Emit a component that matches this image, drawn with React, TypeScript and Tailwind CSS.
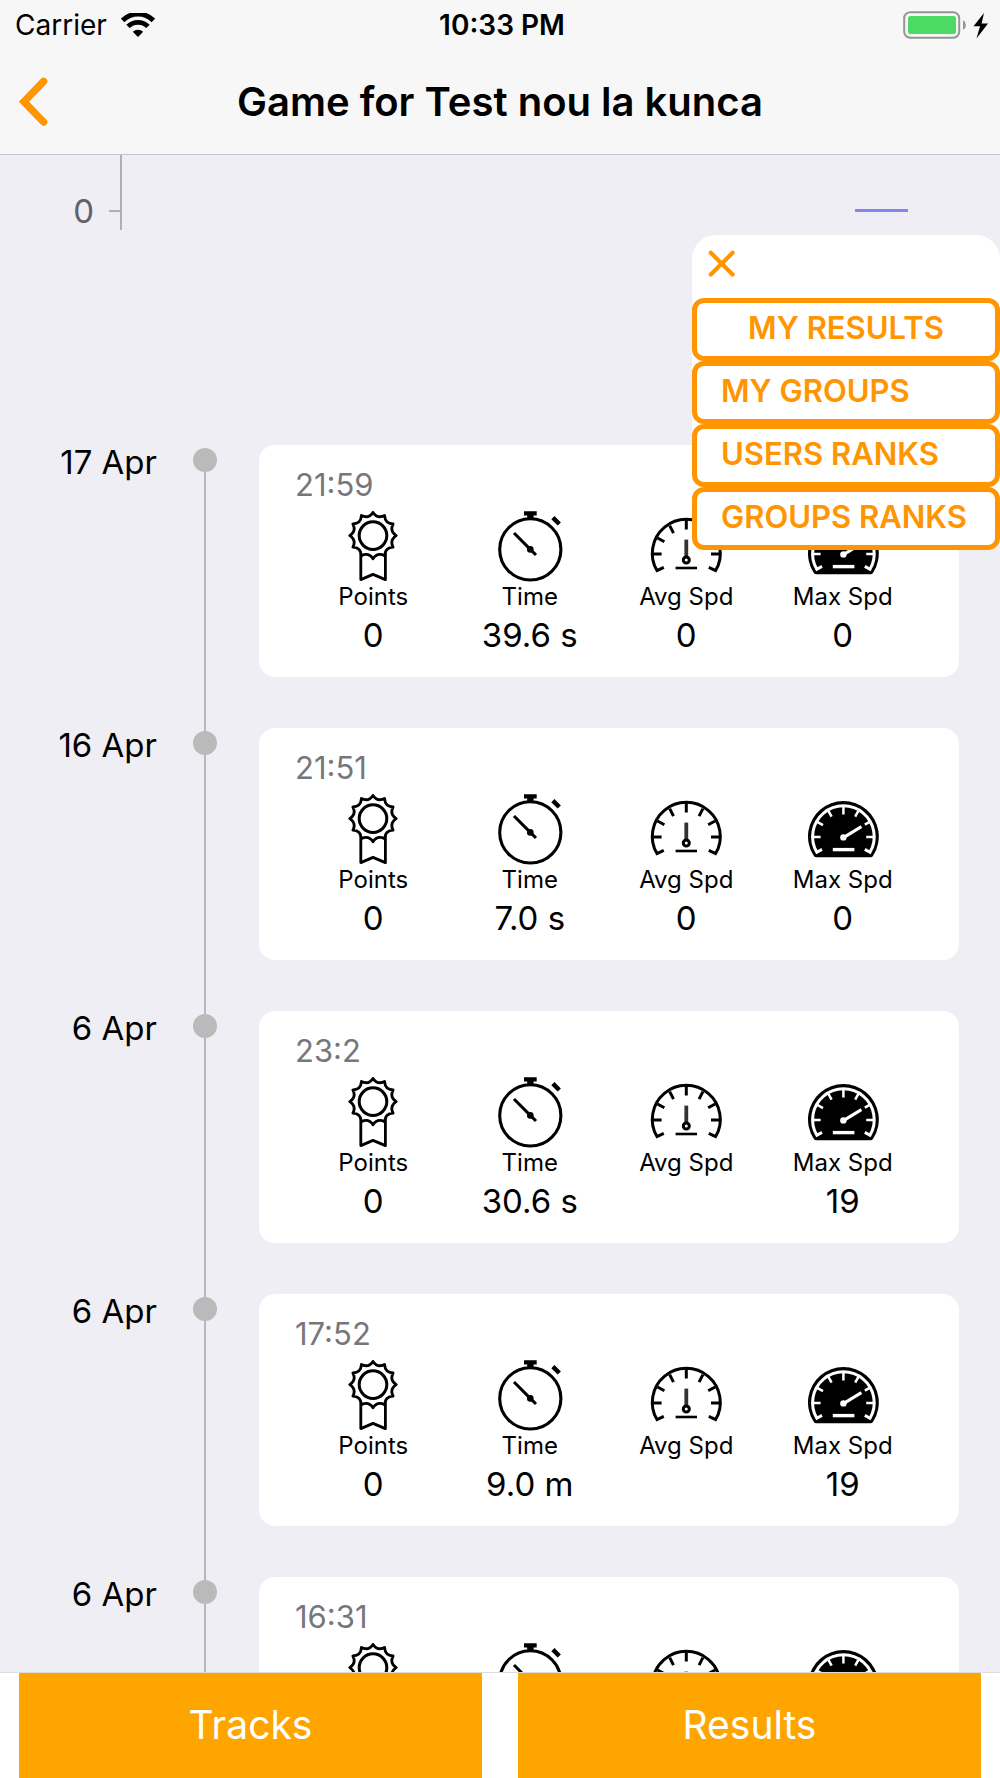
import { useState } from 'react';

interface Run {
  date: string;
  time: string;
  points: string;
  duration: string;
  avgSpeed: string;
  maxSpeed: string;
}

const runs: Run[] = [
  { date: '17 Apr', time: '21:59', points: '0', duration: '39.6 s', avgSpeed: '0', maxSpeed: '0' },
  { date: '16 Apr', time: '21:51', points: '0', duration: '7.0 s', avgSpeed: '0', maxSpeed: '0' },
  { date: '6 Apr', time: '23:2', points: '0', duration: '30.6 s', avgSpeed: '', maxSpeed: '19' },
  { date: '6 Apr', time: '17:52', points: '0', duration: '9.0 m', avgSpeed: '', maxSpeed: '19' },
  { date: '6 Apr', time: '16:31', points: '', duration: '', avgSpeed: '', maxSpeed: '' },
];

const menuItems = ['MY RESULTS', 'MY GROUPS', 'USERS RANKS', 'GROUPS RANKS'];

// Twelve-pointed rosette outline around (cx, cy)
function rosettePath(cx: number, cy: number, outer: number, inner: number) {
  const at = (deg: number, r: number) => {
    const rad = ((deg - 90) * Math.PI) / 180;
    return `${(cx + r * Math.cos(rad)).toFixed(2)} ${(cy + r * Math.sin(rad)).toFixed(2)}`;
  };
  let d = `M${at(0, outer)}`;
  for (let i = 0; i < 12; i++) {
    d += `Q${at(i * 30 + 15, inner)} ${at((i + 1) * 30, outer)}`;
  }
  return d + 'Z';
}

const rosette = rosettePath(40, 24.6, 23.2, 17);

function MedalIcon() {
  return (
    <svg viewBox="0 0 80 72" className="h-[72px] w-20" fill="none" stroke="black" strokeWidth="2.8" strokeLinejoin="round" aria-hidden="true">
      <path d="M27.8 40V68.6L40 63.4L52.4 68.6V40" />
      <path d={rosette} fill="white" />
      <circle cx="40" cy="24.6" r="13.8" strokeWidth="3" />
    </svg>
  );
}

function StopwatchIcon() {
  return (
    <svg viewBox="0 0 80 72" className="h-[72px] w-20" aria-hidden="true">
      <circle cx="40.3" cy="38.4" r="30.6" fill="none" stroke="black" strokeWidth="3.1" />
      <path d="M34 0.3H46.7V4.6H43.6V8H37.2V4.6H34Z" />
      <path d="M61.3 8.2L64.5 5L70.9 11.4L67.7 14.6Z" />
      <path d="M24 22L40.3 38.4L46 44" fill="none" stroke="black" strokeWidth="3" />
      <circle cx="40.3" cy="38.4" r="3.3" />
    </svg>
  );
}

function AvgSpeedIcon() {
  return (
    <svg viewBox="0 0 80 72" className="h-[72px] w-20" fill="none" stroke="black" strokeWidth="3" aria-hidden="true">
      <path d="M17.8 56.3L11 59.6A34 34 0 1 1 69.6 59.6L62.8 56.3" />
      <path d="M40.3 8.6V18.4M6.3 43H15.6M65 43H74.3M11.5 27L18.4 30.8M69.1 27L62.2 30.8M23.7 14.6L27.5 22.2M56.9 14.6L53.1 22.2" />
      <path d="M40.3 28.6V46" strokeWidth="3.8" stroke="#333" />
      <circle cx="40.3" cy="49" r="3" />
      <path d="M29.6 57H51" strokeWidth="2.6" />
    </svg>
  );
}

function MaxSpeedIcon() {
  return (
    <svg viewBox="0 0 80 72" className="h-[72px] w-20" fill="none" stroke="white" strokeWidth="2.5" aria-hidden="true">
      <path d="M10.3 61Q11.3 63.2 13 63.2H67.8Q69.5 63.2 70.5 61A35.4 35.4 0 1 0 10.3 61Z" fill="black" stroke="none" />
      <path d="M19 55.4L13.8 58.2A30.8 30.8 0 1 1 67 58.2L61.8 55.4" strokeWidth="3" />
      <path d="M40.4 12V20.4M9.6 43H17.6M63.2 43H71.2M13.8 27.6L20 31.2M67 27.6L61.8 30.6M25 16.2L28.6 22.6M55.8 16.2L52.2 22.6" />
      <path d="M40.4 43.6L58.4 32.6" strokeWidth="3" />
      <circle cx="40.4" cy="43.4" r="3.2" fill="white" stroke="none" />
      <path d="M29.8 55.6H51.4" strokeWidth="3.4" />
    </svg>
  );
}

function Stat({ icon, label, value }: { icon: React.ReactNode; label: string; value: string }) {
  return (
    <div className="flex flex-1 flex-col items-center">
      {icon}
      <span className="text-[24px] leading-7">{label}</span>
      <span className="h-12 text-[33px] leading-[48px]">{value}</span>
    </div>
  );
}

function RunRow({ run, first }: { run: Run; first: boolean }) {
  return (
    <li className="flex shrink-0">
      <div className="w-[157px] text-right text-[33px] leading-[34px]">{run.date}</div>
      <div className="ml-9 flex w-6 shrink-0 flex-col items-center">
        <div className={first ? 'h-[3px]' : 'h-[3px] w-[2px] bg-[#b8b8b8]'} />
        <div className="size-6 rounded-full bg-[#bababa]" />
        <div className="w-[2px] flex-1 bg-[#b8b8b8]" />
      </div>
      <div className="mr-[41px] mb-[51px] ml-[42px] flex-1 rounded-2xl bg-white pt-[22px] pr-[38px] pb-[18px] pl-9">
        <div className="text-[31px] leading-9 text-[#77777b]">{run.time}</div>
        <div className="mt-2 flex">
          <Stat icon={<MedalIcon />} label="Points" value={run.points} />
          <Stat icon={<StopwatchIcon />} label="Time" value={run.duration} />
          <Stat icon={<AvgSpeedIcon />} label="Avg Spd" value={run.avgSpeed} />
          <Stat icon={<MaxSpeedIcon />} label="Max Spd" value={run.maxSpeed} />
        </div>
      </div>
    </li>
  );
}

function StatusBar() {
  return (
    <div className="grid h-[50px] grid-cols-3 items-center pr-[11px] pl-[15px] text-[28px] leading-9">
      <div className="flex items-center gap-[14px]">
        <span>Carrier</span>
        <svg viewBox="0 0 34 24" className="h-6 w-[34px]" fill="none" stroke="black" aria-hidden="true">
          <path d="M1.6 7.4A22 22 0 0 1 32.4 7.4" strokeWidth="5" />
          <path d="M7 13.4A14.2 14.2 0 0 1 27 13.4" strokeWidth="4.8" />
          <path d="M17 24L11.8 18.8A7.4 7.4 0 0 1 22.2 18.8Z" fill="black" stroke="none" />
        </svg>
      </div>
      <span className="text-center font-semibold">10:33 PM</span>
      <div className="flex justify-end">
        <svg viewBox="0 0 86 28" className="h-7 w-[86px]" aria-hidden="true">
          <rect x="1.2" y="1.2" width="55" height="25.6" rx="6" fill="none" stroke="#959595" strokeWidth="2" />
          <rect x="5" y="5" width="48" height="18" rx="2.5" fill="#4cd964" />
          <path d="M60 9Q63 11 63 14Q63 17 60 19Z" fill="#959595" />
          <path d="M81 2L70.5 15.2H77L73.5 27.4L85 12.4H78.6Z" />
        </svg>
      </div>
    </div>
  );
}

export default function App() {
  const [menuOpen, setMenuOpen] = useState(true);

  return (
    <div className="flex h-screen flex-col overflow-hidden bg-[#efeef4] font-['Inter','Liberation_Sans',sans-serif] text-black">
      <header className="shrink-0 border-b border-[#c4c4c6] bg-[#f7f7f7]">
        <StatusBar />
        <div className="grid h-[104px] grid-cols-[60px_1fr_60px] items-center">
          <button type="button" aria-label="Back" className="pl-[17px]">
            <svg viewBox="0 0 32 50" className="h-[50px] w-8" fill="none" stroke="#ff9500" strokeWidth="7.4" strokeLinecap="round" strokeLinejoin="miter">
              <path d="M26.6 4.4L7 24.8L26.6 45" />
            </svg>
          </button>
          <h1 className="text-center text-[40px] leading-[48px] font-semibold">Game for Test nou la kunca</h1>
        </div>
      </header>

      <main className="relative flex-1 overflow-hidden">
        {/* Bottom end of the progress chart */}
        <div className="flex h-[290px] items-start">
          <span className="mt-[38px] w-[94px] text-right text-[33px] leading-9 text-[#626266]">0</span>
          <div className="mt-[55px] ml-[15px] h-[2px] w-[11px] bg-[#b0b0b2]" />
          <div className="h-[75px] w-[2px] bg-[#b0b0b2]" />
          <div className="mt-[54px] mr-[92px] ml-auto h-[3px] w-[53px] bg-[#8684ee]" />
        </div>

        <ul className="flex flex-col">
          {runs.map((run, index) => (
            <RunRow key={`${run.date}-${run.time}`} run={run} first={index === 0} />
          ))}
        </ul>

        {menuOpen && (
          <nav className="absolute top-20 right-0 flex w-[308px] flex-col rounded-t-3xl rounded-b-xl bg-white">
            <button type="button" aria-label="Close menu" onClick={() => setMenuOpen(false)} className="h-[63px] w-14 pt-3 pb-[19px] pl-[13px]">
              <svg viewBox="0 0 32 32" className="size-8" fill="none" stroke="#ff9500" strokeWidth="4.2" strokeLinecap="round">
                <path d="M5.8 5.8L27.6 27.4M27.6 5.8L5.8 27.4" />
              </svg>
            </button>
            {menuItems.map((item, index) => (
              <button
                key={item}
                type="button"
                className={`h-[63px] rounded-xl border-[5px] border-[#ff9500] px-6 pb-1 text-[31px] leading-9 font-semibold whitespace-nowrap text-[#ff9500] ${
                  index === 0 ? 'text-center' : 'text-left'
                }`}
              >
                {item}
              </button>
            ))}
          </nav>
        )}
      </main>

      <footer className="flex h-[106px] shrink-0 gap-9 border-t border-[#dcdcdf] bg-white px-[19px]">
        <button type="button" className="flex-1 bg-[#ffa500] pb-[2px] text-[39px] leading-[48px] text-white">
          Tracks
        </button>
        <button type="button" className="flex-1 bg-[#ffa500] pb-[2px] text-[39px] leading-[48px] text-white">
          Results
        </button>
      </footer>
    </div>
  );
}
